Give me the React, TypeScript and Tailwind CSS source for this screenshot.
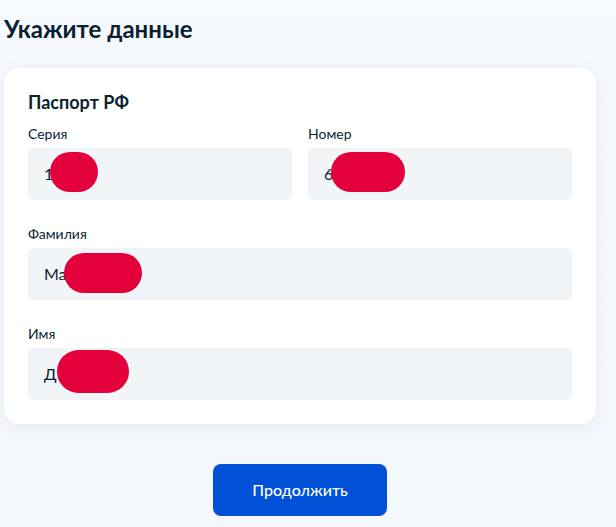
import React from "react";

type FieldProps = {
  label: string;
  value: string;
  blob: string;
};

function Field({ label, value, blob }: FieldProps) {
  return (
    <div className="flex flex-col">
      <span className="text-[14px] leading-[20px] text-[#0b1f33]">{label}</span>
      <div className="relative mt-[4px] flex h-[52px] items-center rounded-[6px] bg-[#f2f5f8] pl-[16px] text-[16px] text-[#0b1f33]">
        {value}
        <span className={`absolute rounded-full bg-[#e4003a] ${blob}`} />
      </div>
    </div>
  );
}

export default function App() {
  return (
    <div
      className="min-h-[527px] w-full bg-gradient-to-b from-[#f6f9fd] to-[#f4f7fb] pt-[13px] text-[#0b1f33]"
      style={{ fontFamily: "Lato, 'Noto Sans', sans-serif" }}
    >
      <div className="ml-[4px] w-[592px]">
        <h1 className="text-[24px] font-bold leading-[32px]">Укажите данные</h1>
        <div className="mt-[23px] rounded-[16px] bg-white px-[24px] pb-[24px] pt-[22px] shadow-[0_2px_16px_rgba(120,150,200,0.12)]">
          <h2 className="mb-[10px] text-[18px] font-bold leading-[24px]">Паспорт РФ</h2>
          <div className="grid grid-cols-2 gap-x-[16px]">
            <Field label="Серия" value="1" blob="left-[22px] top-[4px] h-[40px] w-[48px]" />
            <Field label="Номер" value="6" blob="left-[23px] top-[4px] h-[40px] w-[74px]" />
          </div>
          <div className="mt-[24px]">
            <Field label="Фамилия" value="Ма" blob="left-[36px] top-[5px] h-[40px] w-[78px]" />
          </div>
          <div className="mt-[24px]">
            <Field label="Имя" value="Д" blob="left-[29px] top-[2px] h-[43px] w-[72px]" />
          </div>
        </div>
        <div className="mt-[40px] flex justify-center">
          <button className="h-[52px] w-[174px] rounded-[8px] bg-[#0050d8] text-[16px] font-medium text-white">
            Продолжить
          </button>
        </div>
      </div>
    </div>
  );
}
